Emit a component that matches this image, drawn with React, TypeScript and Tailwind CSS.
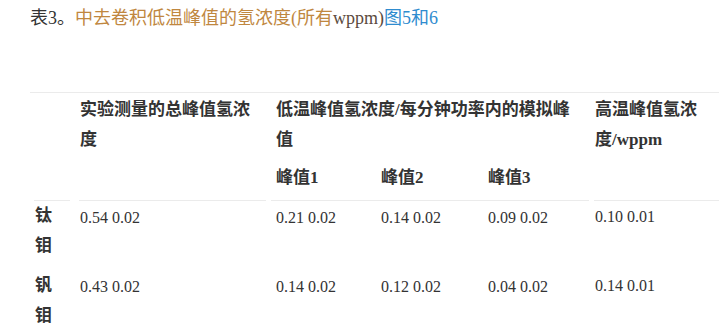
import React from 'react'

const cjk = "font-['Liberation_Serif','Noto_Sans_CJK_SC',serif]"

const rows = [
    { name: '钛钼', vals: ['0.54 0.02', '0.21 0.02', '0.14 0.02', '0.09 0.02', '0.10 0.01'] },
    { name: '钒钼', vals: ['0.43 0.02', '0.14 0.02', '0.12 0.02', '0.04 0.02', '0.14 0.01'] },
]

export default function App() {
    return (
        <div className={`w-[719px] h-[330px] overflow-hidden bg-white text-[#333] ${cjk}`}>
            {/* caption */}
            <p className="pl-[30px] pt-[6px] text-[18px] leading-[24px]">
                表3。
                <span className="text-[#c0873f]">中去卷积低温峰值的氢浓度(所有</span>
                <span className="text-[#5b4a3c]">wppm)</span>
                <span className="text-[#2f8ccf]">图5和6</span>
            </p>

            {/* table */}
            <div className="mt-[62px] ml-[30px] border-t border-[#ebebeb]">
                <div className="grid grid-cols-[49px_192px_105px_107px_107px_129px] text-[17px] leading-[30px] font-bold">
                    <div className="row-span-2" />
                    <div className="row-span-2 pt-[2px] pl-[1px] w-[181px]">实验测量的总峰值氢浓度</div>
                    <div className="col-span-3 pt-[2px] pl-[5px] pr-[8px]">低温峰值氢浓度/每分钟功率内的模拟峰值</div>
                    <div className="row-span-2 pt-[2px] pl-[5px] w-[112px]">高温峰值氢浓度/wppm</div>
                    <div className="pt-[8px] pb-[7px] pl-[5px]">峰值1</div>
                    <div className="pt-[8px] pb-[7px] pl-[5px]">峰值2</div>
                    <div className="pt-[8px] pb-[7px] pl-[5px]">峰值3</div>
                </div>

                {rows.map((r, i) => (
                    <div key={r.name} className="grid grid-cols-[49px_192px_105px_107px_107px_129px] leading-[30px]">
                        <div className={`ml-[4px] mr-[9px] pb-[9px] ${i === 0 ? 'border-t border-[#ebebeb]' : 'pt-[1px]'}`}>
                            <div className="w-[18px] pl-[1px] text-[17px] font-bold">{r.name}</div>
                        </div>
                        <div className={`mr-[5px] pl-[1px] pt-[2px] text-[16px] ${i === 0 ? 'border-t border-[#ebebeb]' : ''}`}>
                            {r.vals[0]}
                        </div>
                        <div className={`col-span-3 grid grid-cols-[105px_107px_107px] mr-[1px] pt-[2px] text-[16px] ${i === 0 ? 'border-t border-[#ebebeb]' : ''}`}>
                            <div className="pl-[5px]">{r.vals[1]}</div>
                            <div className="pl-[5px]">{r.vals[2]}</div>
                            <div className="pl-[5px]">{r.vals[3]}</div>
                        </div>
                        <div className={`ml-[4px] pl-[1px] pt-[1px] text-[16px] ${i === 0 ? 'border-t border-[#ebebeb]' : ''}`}>
                            {r.vals[4]}
                        </div>
                    </div>
                ))}
            </div>
        </div>
    )
}
